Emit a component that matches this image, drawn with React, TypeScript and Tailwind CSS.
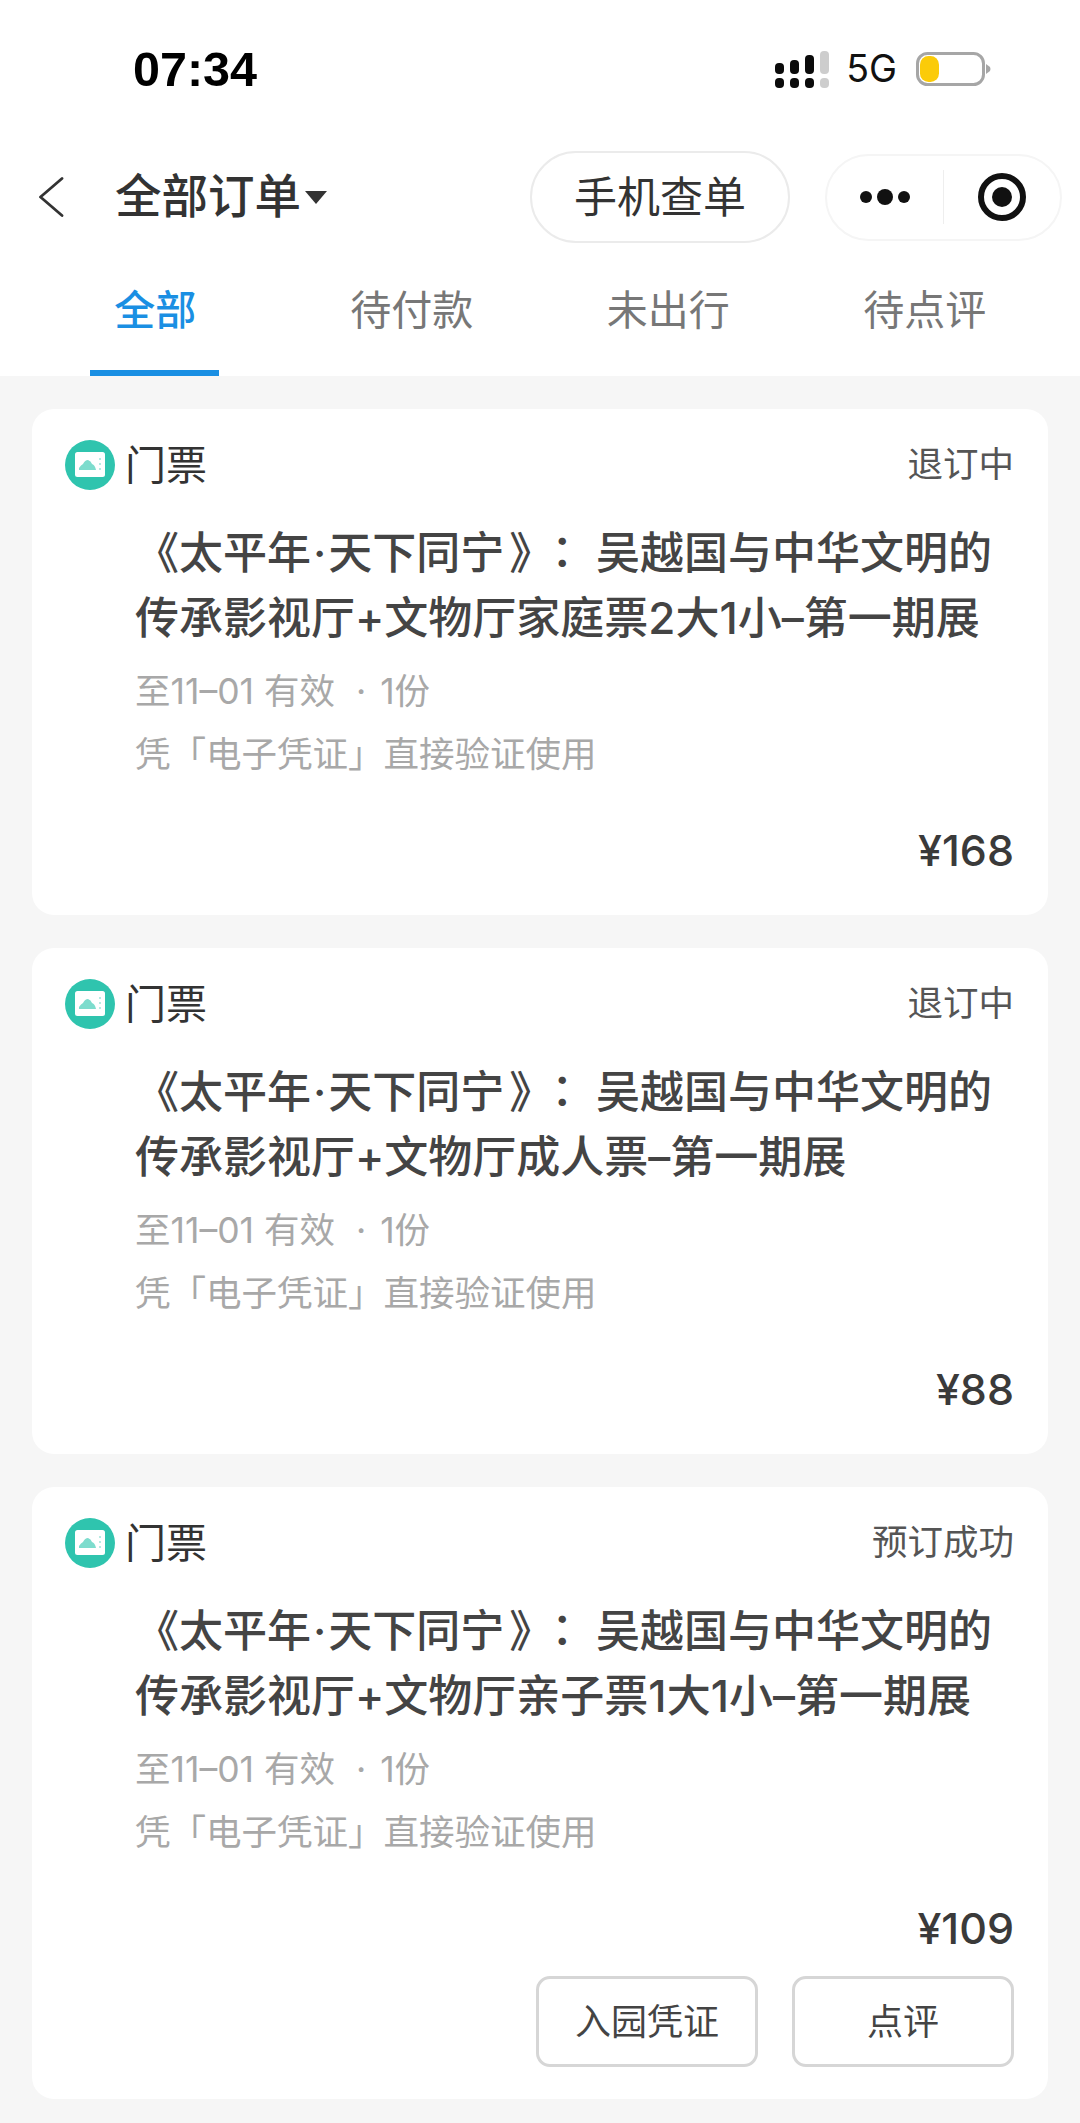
const CJK = '"Noto Sans CJK SC", sans-serif';
const FONT = 'Inter, ' + CJK;

interface Order {
  status: string;
  line2: string;
  price: string;
  actions?: string[];
}

const orders: Order[] = [
  { status: '退订中', line2: '传承影视厅+文物厅家庭票2大1小–第一期展', price: '¥168' },
  { status: '退订中', line2: '传承影视厅+文物厅成人票–第一期展', price: '¥88' },
  {
    status: '预订成功',
    line2: '传承影视厅+文物厅亲子票1大1小–第一期展',
    price: '¥109',
    actions: ['入园凭证', '点评'],
  },
];

const tabs = ['全部', '待付款', '未出行', '待点评'];

const SignalIcon = () => (
  <svg width="54" height="37" viewBox="0 0 54 37" fill="none">
    <rect x="0" y="12" width="9" height="11" rx="4" fill="#0b0b0b" />
    <rect x="15" y="9" width="9" height="14" rx="4" fill="#0b0b0b" />
    <rect x="30" y="4" width="9" height="19" rx="4" fill="#0b0b0b" />
    <rect x="45" y="0" width="9" height="23" rx="4" fill="#cdcdcd" />
    <rect x="0" y="27" width="9" height="10" rx="4" fill="#0b0b0b" />
    <rect x="15" y="27" width="9" height="10" rx="4" fill="#0b0b0b" />
    <rect x="30" y="27" width="9" height="10" rx="4" fill="#0b0b0b" />
    <rect x="45" y="27" width="9" height="10" rx="4" fill="#cdcdcd" />
  </svg>
);

const BatteryIcon = () => (
  <svg width="75" height="34" viewBox="0 0 75 34" fill="none">
    <rect x="1.5" y="1.5" width="66" height="31" rx="10" stroke="#a6a6a6" strokeWidth="3" fill="#fff" />
    <rect x="4" y="4" width="19" height="26" rx="8.5" fill="#fbcb09" />
    <path d="M70 12 L74 15 Q75 17 74 19 L70 22 Z" fill="#a6a6a6" />
  </svg>
);

const BackIcon = () => (
  <svg width="26" height="40" viewBox="0 0 26 40" fill="none" className="shrink-0">
    <path d="M24 1.5 L2.5 20 L24 38.5" stroke="#333333" strokeWidth="2.8" strokeLinecap="round" strokeLinejoin="round" />
  </svg>
);

const TicketIcon = () => (
  <svg width="50" height="50" viewBox="0 0 50 50">
    <circle cx="25" cy="25" r="25" fill="#2fc4ae" />
    <rect x="10" y="12" width="30" height="25" rx="2.5" fill="#fff" />
    <path d="M14 30 L14 28 Q16 25 18 24 Q20 20 23 20 Q26 21 27 24 Q30 25 31 30 Z" fill="#7ddccd" />
    <circle cx="35" cy="19" r="1" fill="#9fe3d8" />
    <circle cx="35" cy="24" r="1" fill="#9fe3d8" />
    <circle cx="35" cy="29" r="1" fill="#9fe3d8" />
  </svg>
);

const OrderCard = ({ order }: { order: Order }) => (
  <div className={`bg-white rounded-[22px] pl-[33px] pr-[34px] pt-[31px] ${order.actions ? 'pb-[32px]' : 'pb-[37px]'}`}>
    <div className="flex items-center justify-between h-[50px]">
      <div className="flex items-center gap-[10px]">
        <TicketIcon />
        <span className="text-[41px] leading-[50px] text-[#333333]">门票</span>
      </div>
      <span className="text-[35.5px] leading-[50px] text-[#555555]">{order.status}</span>
    </div>
    <div className="pl-[70px] mt-[28px] text-[44px] leading-[65px] font-medium text-[#444444] whitespace-nowrap">
      <div>
        《太平年<span className="mx-[2px]">·</span>天下同宁<span className="ml-[5px]">》</span>
        <span className="ml-[9px] font-['Noto_Sans_CJK_TC']">：</span> 吴越国与中华文明的
      </div>
      <div>{order.line2}</div>
    </div>
    <div className="pl-[70px] mt-[9px] text-[35.5px] leading-[63px] text-[#a8a8a8] whitespace-nowrap">
      <div>
        至11–01 有效 <span className="ml-[11px] mr-[4px]">·</span> 1份
      </div>
      <div>凭「电子凭证」直接验证使用</div>
    </div>
    <div className="mt-[36px] text-right text-[43px] leading-[56px] font-medium text-[#3a3a3a]">
      {order.price}
    </div>
    {order.actions && (
      <div className="flex justify-end gap-[34px] mt-[20px]">
        {order.actions.map((action) => (
          <button
            key={action}
            className="w-[222px] h-[91px] rounded-[14px] border-[3px] border-[#d6d6d6] text-[36px] text-[#444444]"
          >
            {action}
          </button>
        ))}
      </div>
    )}
  </div>
);

export default function App() {
  return (
    <div className="w-[1080px] h-[2123px] overflow-hidden bg-[#f6f6f6]" style={{ fontFamily: FONT }}>
      <div className="bg-white h-[376px]">
        {/* barra de estado */}
        <div className="flex items-center justify-between h-[138px] pl-[133px] pr-[89px]">
          <span
            className="text-[48.5px] font-bold text-black"
            style={{ fontFamily: '"Liberation Sans", sans-serif' }}
          >
            07:34
          </span>
          <div className="flex items-center">
            <SignalIcon />
            <span className="ml-[17px] mr-[19px] text-[37.5px] text-[#111111]">5G</span>
            <BatteryIcon />
          </div>
        </div>

        {/* cabecera */}
        <div className="flex items-center h-[94px] mt-[12px] pl-[38px] pr-[18px]">
          <BackIcon />
          <div className="flex items-center ml-[51px]">
            <span className="text-[46.5px] font-medium text-[#333333] whitespace-nowrap">全部订单</span>
            <span className="ml-[4px] w-0 h-0 border-x-[11px] border-x-transparent border-t-[13px] border-t-[#333333]" />
          </div>
          <div className="ml-auto flex items-center gap-[35px]">
            <div className="w-[260px] h-[92px] rounded-full border-[2px] border-[#ebebeb] flex items-center justify-center text-[43px] text-[#333333]">
              手机查单
            </div>
            <div className="w-[237px] h-[87px] rounded-full border-[2px] border-[#f5f5f5] flex items-center">
              <div className="flex-1 flex items-center justify-center gap-[5px]">
                <span className="w-[12px] h-[12px] rounded-full bg-[#111111]" />
                <span className="w-[16px] h-[16px] rounded-full bg-[#111111]" />
                <span className="w-[12px] h-[12px] rounded-full bg-[#111111]" />
              </div>
              <div className="w-[1px] h-[54px] bg-[#eeeeee]" />
              <div className="flex-1 flex items-center justify-center">
                <div className="w-[48px] h-[48px] rounded-full border-[6px] border-[#111111] flex items-center justify-center">
                  <span className="w-[20px] h-[20px] rounded-full bg-[#111111]" />
                </div>
              </div>
            </div>
          </div>
        </div>

        {/* pestañas */}
        <div className="grid grid-cols-4 h-[108px] mt-[24px] px-[27px]">
          {tabs.map((tab, i) => (
            <div key={tab} className="relative flex justify-center pt-[12px]">
              <span className={`text-[41px] leading-[60px] ${i === 0 ? 'text-[#1a8fe3] font-medium' : 'text-[#777777]'}`}>
                {tab}
              </span>
              {i === 0 && <span className="absolute left-[63px] w-[129px] top-[102px] h-[6px] bg-[#1a8fe3]" />}
            </div>
          ))}
        </div>
      </div>

      <div className="flex flex-col gap-[33px] px-[32px] pt-[33px]">
        {orders.map((order, i) => (
          <OrderCard key={i} order={order} />
        ))}
      </div>
    </div>
  );
}
